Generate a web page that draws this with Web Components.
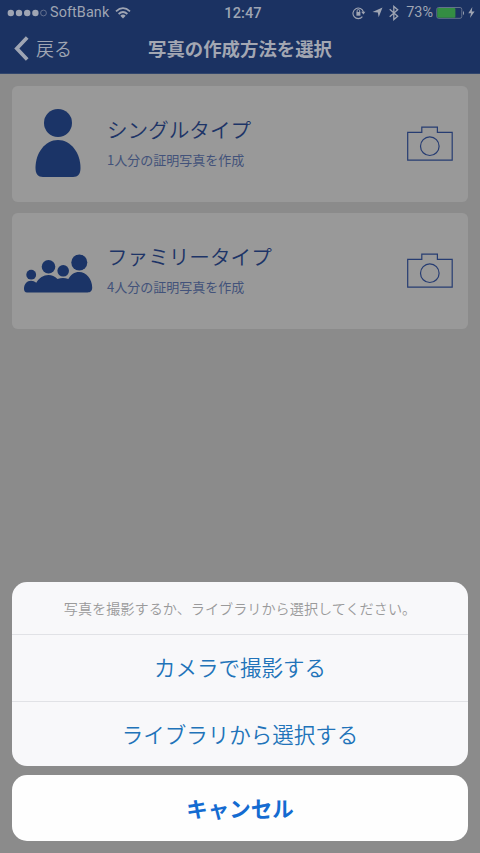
<!DOCTYPE html>
<html lang="ja">
<head>
<meta charset="utf-8">
<title>写真の作成方法を選択</title>
<style>
html,body{margin:0;height:100%}
body{background:#8b8b8b;font-family:"Noto Sans CJK JP",sans-serif;overflow:hidden}
</style>
</head>
<body>
<photo-app></photo-app>
<script>
const define = (name, html) => customElements.define(name, class extends HTMLElement {
  constructor() {
    super();
    const t = document.createElement('template');
    t.innerHTML = html;
    this.attachShadow({mode: 'open'}).appendChild(t.content.cloneNode(true));
  }
});

define('status-bar', `
<style>
:host{display:grid;grid-template-columns:1fr auto 1fr;align-items:center;height:24px;color:#9fa5b3;font:14px/24px Inter,"Liberation Sans",sans-serif;white-space:nowrap}
.l,.r{display:flex;align-items:center}
.l{padding-left:7px}
.r{justify-content:flex-end;padding-right:5px}
svg{display:block;flex:none}
.c{font-family:Roboto,sans-serif;font-weight:500;font-size:14.6px;letter-spacing:.1px;padding-left:6px;padding-top:1px}
.n{font-family:Roboto,sans-serif;font-size:14.4px;padding-top:1px}
</style>
<div class="l">
<svg width="40" height="10" viewBox="0 0 40 10" fill="#9fa5b3"><circle cx="3.8" cy="5" r="3.2"/><circle cx="12" cy="5" r="3.2"/><circle cx="20.2" cy="5" r="3.2"/><circle cx="28.4" cy="5" r="3.2"/><circle cx="36.5" cy="5" r="2.9" fill="none" stroke="#8189a0" stroke-width=".7"/></svg>
<span class="n" style="margin-left:3px;letter-spacing:.1px">SoftBank</span>
<svg style="margin-left:6px" width="16" height="12" viewBox="0 0 16 12" fill="none" stroke="#9fa5b3" stroke-width="1.8"><path d="M1 4.3Q8-2.1 15 4.3M3.6 7Q8 3.1 12.4 7"/><path fill="#9fa5b3" stroke="none" d="M5.3 8.7Q8 6.5 10.7 8.7L8 11.6Z"/></svg>
</div>
<span class="c">12:47</span>
<div class="r">
<svg width="14" height="14" viewBox="0 0 14 14" fill="none" stroke="#9fa5b3"><path d="M10.4 10.7A5.3 5.3 0 1 1 11.4 6" stroke-width="1.1"/><path d="M9.2 5.7h4.2L11.4 8.4z" fill="#9fa5b3" stroke="none"/><path d="M4.4 6h4v3.7h-4z" fill="#9fa5b3" stroke="none"/><path d="M5.1 6V4.8a1.3 1.3 0 0 1 2.6 0V6"/></svg>
<svg style="margin-left:6px" width="11" height="11" viewBox="0 0 11 11" fill="#9fa5b3"><path d="M10.5.5L6.7 10.3 5.8 5.4.5 5z"/></svg>
<svg style="margin-left:6px" width="10" height="16" viewBox="0 0 10 16" fill="none" stroke="#9fa5b3" stroke-width="1.3"><path d="M.7 4.3L8.7 11.2 4.8 14.6V1.4L8.7 4.8.7 11.7"/></svg>
<span class="n" style="margin-left:7px">73%</span>
<svg style="margin-left:3px" width="29" height="14" viewBox="0 0 29 14"><rect x=".8" y="1.5" width="25" height="10.8" rx="1.8" fill="none" stroke="#778198" stroke-width=".8"/><rect x="1.2" y="2" width="18.2" height="9.8" rx="1" fill="#348d43"/><path d="M27 4.7Q29 7 27 9.3z" fill="#9fa5b3"/></svg>
<svg style="margin-left:3px" width="7" height="13" viewBox="0 0 7 13" fill="#9fa5b3"><path d="M4.3 1L.3 7.2H3L2 12 6.6 5.4H3.8z"/></svg>
</div>`);

define('nav-bar', `
<style>
:host{display:grid;grid-template-columns:1fr auto 1fr;align-items:center;height:49px;color:#9fa5b3}
.back{display:flex;align-items:center;padding-left:14px;font-size:18px;line-height:28px;gap:7px;font-weight:350}
.back span{padding-bottom:2px}
svg{display:block}
h1{margin:0;font-size:18.4px;line-height:28px;padding-bottom:2px;font-weight:700;color:#a3a7b2}
</style>
<div class="back"><svg width="15" height="25" viewBox="0 0 15 25" fill="none" stroke="#9fa5b3" stroke-width="3.7"><path d="M13.2 1.4L2.8 12.5 13.2 23.6"/></svg><span><slot name="back"></slot></span></div>
<h1><slot></slot></h1><span></span>`);

define('camera-icon', `
<style>:host{display:block}svg{display:block}</style>
<svg width="46" height="36" viewBox="0 0 46 36" fill="none" stroke="#263c72" stroke-width="1.2"><path d="M.7 6.3H14.8V1.2H30.4V6.3H45.2V34.2H.7Z"/><circle cx="22.8" cy="20.2" r="9.3"/></svg>`);

define('type-card', `
<style>
:host{display:flex;align-items:center;height:116px;border-radius:6px;background:#999;box-shadow:0 0 1px #929292}
.icon{width:92px;display:flex;justify-content:center}
.text{flex:1;padding:0 0 5px 3px;color:#1d3467;white-space:nowrap}
.t{font-size:20.6px;line-height:30px;font-weight:350}
.s{font-size:13px;line-height:20px;margin-top:6px;color:#42527a;font-weight:400}
camera-icon{margin-right:15px}
</style>
<div class="icon"><slot name="icon"></slot></div>
<div class="text"><div class="t"><slot></slot></div><div class="s"><slot name="sub"></slot></div></div>
<camera-icon></camera-icon>`);

define('single-icon', `
<style>:host,svg{display:block}:host{padding-bottom:2px}</style>
<svg width="46" height="70" viewBox="0 0 46 70" fill="#1b3467"><circle cx="23" cy="15" r="14"/><path d="M23 32C36 32 45.5 45 45.5 60C45.5 66 43 69 38 69H8C3 69 .5 66 .5 60C.5 45 10 32 23 32Z"/></svg>`);

define('family-icon', `
<style>:host,svg{display:block}:host{padding-top:3px}</style>
<svg width="70" height="40" viewBox="0 0 70 40" fill="#1b3467"><circle cx="8.2" cy="21.7" r="4.9"/><circle cx="25.5" cy="13.7" r="6.8"/><circle cx="40.2" cy="17.8" r="5.8"/><circle cx="56.3" cy="9.5" r="8"/><path d="M1 36C1 31 4 27.8 8 27.8Q11 27.8 13.3 29.7C16 25 20.5 22 25.5 22Q30.5 22 34.5 26Q40 24 45.3 26C48 21.5 51.5 19 56 19C63.5 19 69.2 26.5 69.2 34.5C69.2 38 67.5 39.4 64.5 39.4H4C2 39.4 1 38 1 36Z"/></svg>`);

define('sheet-action', `
<style>
:host{display:flex;align-items:center;justify-content:center;height:67px;padding-bottom:2px;box-sizing:border-box;color:#2173b9;font-size:21.5px;line-height:32px;font-weight:350;white-space:nowrap}
:host([divided]){border-top:1px solid #e1e2e6}
:host([cancel]){height:66px;padding-bottom:1px;background:#fefefe;border-radius:15px;color:#146bd1;font-weight:700}
</style><span><slot></slot></span>`);

define('action-sheet', `
<style>
:host{display:flex;flex-direction:column;gap:9px;padding:0 12px 12px}
.group{height:184px;border-radius:15px;background:#f8f8fa;overflow:hidden}
.msg{height:52px;display:flex;align-items:center;justify-content:center;color:#9a9a9b;font-size:14.15px;line-height:20px;font-weight:350;white-space:nowrap}
</style>
<div class="group"><div class="msg"><span><slot name="message"></slot></span></div><slot></slot></div>
<slot name="cancel"></slot>`);

define('photo-app', `
<style>
:host{display:flex;flex-direction:column;width:480px;height:853px}
header{background:#1b3262;height:73px;border-bottom:1px solid #31466d}
main{display:flex;flex-direction:column;gap:11px;padding:12px 12px 0}
action-sheet{margin-top:auto}
</style>
<header><status-bar></status-bar><nav-bar><span slot="back">戻る</span>写真の作成方法を選択</nav-bar></header>
<main>
<type-card><single-icon slot="icon"></single-icon>シングルタイプ<span slot="sub">1人分の証明写真を作成</span></type-card>
<type-card><family-icon slot="icon"></family-icon>ファミリータイプ<span slot="sub">4人分の証明写真を作成</span></type-card>
</main>
<action-sheet><span slot="message">写真を撮影するか、ライブラリから選択してください。</span>
<sheet-action divided>カメラで撮影する</sheet-action>
<sheet-action divided>ライブラリから選択する</sheet-action>
<sheet-action slot="cancel" cancel>キャンセル</sheet-action>
</action-sheet>`);
</script>
</body>
</html>
